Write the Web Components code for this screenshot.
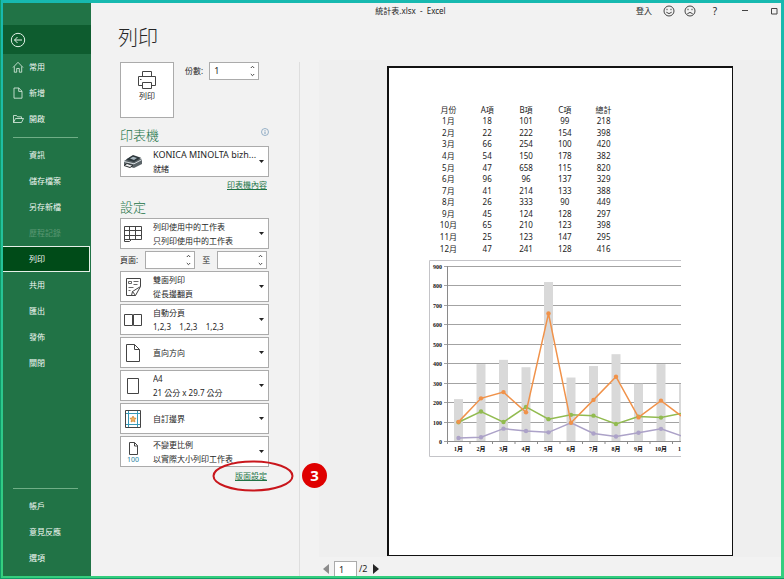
<!DOCTYPE html>
<html lang="zh-Hant">
<head>
<meta charset="utf-8">
<title>統計表.xlsx - Excel</title>
<style>
html, body { margin: 0; }
body { font-family: "Noto Sans", "Noto Sans CJK TC", sans-serif; font-size: 8px; line-height: 12px; color: #262626; }
</style>
</head>
<body>
<print-window></print-window>
<script>
function define(name, html, setup) {
  const t = document.createElement('template');
  t.innerHTML = html;
  customElements.define(name, class extends HTMLElement {
    constructor() {
      super();
      this.attachShadow({ mode: 'open' }).append(t.content.cloneNode(true));
    }
    connectedCallback() { if (setup) setup(this, this.shadowRoot); }
  });
}

/* One entry of the green navigation column. */
define('nav-item', `
<style>
:host { display: block; height: 26px; }
button { all: unset; box-sizing: border-box; display: grid; grid-template-columns: 12px 1fr; gap: 5px; align-items: center; width: 100%; height: 100%; padding-left: 9px; color: #f1f8f3; font-size: 8px; cursor: pointer; }
button:disabled { color: #5a9873; }
:host([current]) button { background: #004b18; border: solid #e6f0e8; border-width: 1px 1px 1px 0; }
:host([current]) { margin-right: 1px; }
.icon { display: grid; }
</style>
<button><span class="icon"><slot name="icon"></slot></span><span><slot></slot></span></button>`,
(el, root) => {
  const b = root.querySelector('button');
  b.disabled = el.hasAttribute('disabled');
  if (el.hasAttribute('current')) b.setAttribute('aria-current', 'page');
});

define('side-nav', `
<style>
:host { display: flex; flex-direction: column; background: #217346; padding: 22px 0 5px; }
.back { all: unset; box-sizing: border-box; height: 29px; padding-left: 7px; background: #0e5c2f; display: flex; align-items: center; cursor: pointer; }
hr { width: calc(100% - 23px); margin: 5px 0 4px 10px; border: 0; border-top: 1px solid #6fae86; box-sizing: border-box; }
nav:last-of-type { margin-top: auto; }
svg { fill: none; stroke: #e3f1e7; stroke-width: 1; }
nav svg { stroke-width: .8; }
</style>
<button class="back" aria-label="返回"><svg width="16" height="16" viewBox="0 0 16 16"><circle cx="8" cy="8" r="6.7"/><path d="M12 8H4.5M7.5 5l-3 3 3 3"/></svg></button>
<nav>
<nav-item><svg slot="icon" width="12" height="12" viewBox="0 0 12 12"><path d="M1 6.5 6 1.3l5 5.2M2.3 5.5v5.7h2.4V7.5h2.6v3.7h2.4V5.5"/></svg>常用</nav-item>
<nav-item><svg slot="icon" width="12" height="12" viewBox="0 0 12 12"><path d="M2 1h4.8L10 4.2V11.2H2zM6.7 1v3.4H10"/></svg>新增</nav-item>
<nav-item><svg slot="icon" width="12" height="12" viewBox="0 0 12 12"><path d="M1.5 9.5v-7h3l1 1.3h4v1.7M1.5 9.5l2-4h8l-2 4z"/></svg>開啟</nav-item>
<hr>
<nav-item>資訊</nav-item><nav-item>儲存檔案</nav-item><nav-item>另存新檔</nav-item><nav-item disabled>歷程記錄</nav-item><nav-item current>列印</nav-item><nav-item>共用</nav-item><nav-item>匯出</nav-item><nav-item>發佈</nav-item><nav-item>關閉</nav-item>
</nav>
<nav>
<hr>
<nav-item>帳戶</nav-item><nav-item>意見反應</nav-item><nav-item>選項</nav-item>
</nav>`);

define('title-bar', `
<style>
:host { display: flex; align-items: center; height: 16px; }
.name { flex: 1; text-align: center; padding-left: 94px; white-space: pre; }
.tools { display: flex; align-items: center; }
button { all: unset; display: grid; place-items: center; cursor: pointer; }
.face { width: 21px; }
.help { width: 30px; font-size: 10px; }
.win { width: 30px; }
.win:last-child { width: 14px; margin-left: 7px; }
svg { fill: none; stroke: #444; stroke-width: 1; }
.tools .sign { margin-right: 6px; }
</style>
<span class="name">統計表.xlsx  -  Excel</span>
<div class="tools">
<button class="sign">登入</button>
<button class="face" aria-label="微笑"><svg width="12" height="12" viewBox="0 0 12 12"><circle cx="6" cy="6" r="5"/><path d="M3.3 7.2q2.7 2.8 5.4 0M4 3.8v1.4M8 3.8v1.4"/></svg></button>
<button class="face" aria-label="皺眉"><svg width="12" height="12" viewBox="0 0 12 12"><circle cx="6" cy="6" r="5"/><path d="M3.3 8.8q2.7-2.8 5.4 0M4 3.8v1.4M8 3.8v1.4"/></svg></button>
<button class="help" aria-label="說明">?</button>
<button class="win" aria-label="最小化"><svg width="8" height="8" viewBox="0 0 8 8"><path d="M1 3.5h6"/></svg></button>
<button class="win" aria-label="最大化"><svg width="8" height="8" viewBox="0 0 8 8"><path d="M1.5 1.500h5.500v5.500h-5.500z"/></svg></button>
</div>`);

/* Number box with a pair of step buttons. */
define('spin-box', `
<style>
:host { display: grid; grid-template-columns: 1fr 11px; box-sizing: border-box; width: 50px; height: 18px; background: #fff; border: 1px solid #ababab; }
input { all: unset; box-sizing: border-box; min-width: 0; width: 100%; padding-left: 4px; font-size: 9px; appearance: textfield; }
input::-webkit-inner-spin-button { display: none; }
.steps { display: grid; grid-template-rows: 1fr 1fr; }
button { all: unset; display: grid; place-items: center; }
svg { fill: none; stroke: #444; }
</style>
<input type="number" min="1">
<span class="steps"><button aria-label="增加"><svg width="5" height="4" viewBox="0 0 5 4"><path d="M.8 3 2.5 1.3 4.2 3"/></svg></button><button aria-label="減少"><svg width="5" height="4" viewBox="0 0 5 4"><path d="M.8 1 2.5 2.7 4.2 1"/></svg></button></span>`,
(el, root) => {
  const i = root.querySelector('input'), [up, down] = root.querySelectorAll('button');
  i.value = el.getAttribute('value') || '';
  i.setAttribute('aria-label', el.getAttribute('label'));
  up.onclick = () => i.stepUp();
  down.onclick = () => i.stepDown();
});

/* Drop-down with an icon and an optional description line. */
define('setting-picker', `
<style>
:host { display: grid; grid-template-columns: 24px 1fr 5px; grid-template-rows: 1fr 1fr; align-items: center; box-sizing: border-box; height: 31px; padding-right: 4px; background: #fff; border: 1px solid #ababab; }
.icon { grid-area: 1 / 1 / 3 / 2; display: grid; place-items: center; }
select { all: unset; grid-area: 1 / 2 / 2 / 4; padding-left: 8px; line-height: 13px; white-space: nowrap; font-size: 8px; }
:host(:not([note])) select { grid-row: 1 / 3; }
:host([latin]) select { font-size: 9px; }
.note { grid-area: 2 / 2 / 3 / 3; padding-left: 8px; white-space: pre; pointer-events: none; }
.arrow { grid-area: 1 / 3 / 3 / 4; pointer-events: none; }
</style>
<span class="icon"><slot></slot></span>
<select><option></option></select>
<span class="note"></span>
<svg class="arrow" width="5" height="3" viewBox="0 0 5 3"><path d="M0 0h5L2.5 3z" fill="#222"/></svg>`,
(el, root) => {
  root.querySelector('option').textContent = el.getAttribute('value');
  root.querySelector('select').setAttribute('aria-label', el.getAttribute('label'));
  const n = root.querySelector('.note');
  if (el.hasAttribute('note')) n.textContent = el.getAttribute('note'); else n.remove();
});

define('print-settings', `
<style>
:host { display: flex; flex-direction: column; gap: 2px; box-sizing: border-box; padding: 0 30px 8px 29px; border-right: 1px solid #dedede; }
.top { display: flex; gap: 11px; height: 56px; }
.top label { line-height: 18px; }
.top .copies { display: flex; gap: 6px; align-items: flex-start; }
.print { all: unset; box-sizing: border-box; width: 54px; background: #fff; border: 1px solid #ababab; display: flex; flex-direction: column; align-items: center; padding-top: 7px; cursor: pointer; }
.head { display: flex; justify-content: space-between; height: 18px; margin-top: 6px; }
h2 { margin: 0; font-size: 13px; line-height: 18px; font-weight: 300; color: #217346; }
.range { display: flex; align-items: center; gap: 7px; height: 18px; }
.link { position: relative; height: 11px; line-height: 11px; padding-right: 2px; text-align: right; }
.link.last { margin-top: 1px; }
a { color: #217346; text-decoration: underline; }
.ring { position: absolute; right: -25px; top: -10px; }
.badge { position: absolute; right: -58px; top: -7px; width: 25px; height: 25px; border-radius: 50%; background: #df0000; color: #fff; font: bold 15px/25px "Noto Sans", sans-serif; text-align: center; }
.line { fill: none; stroke: #444; }
</style>
<div class="top">
<button class="print"><svg class="line" width="20" height="20" viewBox="0 0 20 20"><path d="M5.5 6.500v-5h9v5M5.500 15.500h-4v-9h17v9h-4M5.500 12.500h9v6h-9zM3 9.500h1.500"/></svg><span>列印</span></button>
<div class="copies"><label>份數:</label><spin-box label="份數" value="1"></spin-box></div>
</div>
<div class="head"><h2>印表機</h2><svg width="8" height="12" viewBox="0 0 8 12" fill="none" stroke="#7f9fbd"><circle cx="4" cy="6" r="3.500" stroke-width=".8"/><path d="M4 5.500v2.500M4 4v.8"/></svg></div>
<setting-picker latin label="印表機" value="KONICA MINOLTA bizh..." note="就緒"><svg width="20" height="16" viewBox="0 0 20 16"><path d="M1 7 9 2l10 3v5l-8 4-10-3z" fill="#5b6468"/><path d="M3 5.500 10 1l8 2.800-7 4.200z" fill="#2e383d"/><path d="M7 4.500l3-1.700 4 1.300-3 1.900z" fill="#a9b8c0"/><path d="M1 7.500l10 2.300L19 5.500" stroke="#d6dcdf" fill="none"/><path d="M1 11.500 4 9.500l6 2-3 2z" fill="#f3f3f3" stroke="#2b3033"/></svg></setting-picker>
<div class="link"><a href="#printer">印表機內容</a></div>
<div class="head"><h2>設定</h2></div>
<setting-picker label="列印範圍" value="列印使用中的工作表" note="只列印使用中的工作表"><svg class="line" width="20" height="18" viewBox="0 0 20 18"><path d="M1.500 1.500h17v13h-10l-2 2h-5zM1.500 5.500h17M1.500 10.500h17M6.500 1.500v13M12.500 1.500v13M1.500 14.500h7"/></svg></setting-picker>
<div class="range"><label>頁面:</label><spin-box label="起始頁"></spin-box><label>至</label><spin-box label="結束頁"></spin-box></div>
<setting-picker label="雙面" value="雙面列印" note="從長邊翻頁"><svg class="line" width="18" height="20" viewBox="0 0 18 20"><path d="M8 18.500h-5.500v-17h14v8l-5 9-3-4 8-5M8.500 14.500l-1 4h4"/><path d="M4.500 4.500h3v2h-3zM9.500 4.500h5M9.500 7.500h4M4.500 10.500h5M4.500 13.500h2" stroke-width=".8"/></svg></setting-picker>
<setting-picker label="自動分頁" value="自動分頁" note="1,2,3    1,2,3    1,2,3"><svg class="line" width="20" height="14" viewBox="0 0 20 14"><path d="M1.500 1.500h8v11h-8zM10.500 1.500h8v11h-8z"/></svg></setting-picker>
<setting-picker label="方向" value="直向方向"><svg class="line" width="16" height="20" viewBox="0 0 16 20"><path d="M1.500 1.500h8l5 5v12h-13zM9.500 1.500v5h5"/></svg></setting-picker>
<setting-picker label="紙張大小" value="A4" note="21 公分 x 29.7 公分"><svg class="line" width="14" height="18" viewBox="0 0 14 18"><path d="M1.500 1.500h11v15h-11z"/></svg></setting-picker>
<setting-picker label="邊界" value="自訂邊界"><svg class="line" width="18" height="20" viewBox="0 0 18 20"><path d="M1.500 1.500h15v17h-15z"/><path d="M4.500 2v16M13.500 2v16M2 4.500h14M2 15.500h14" stroke="#3799b8"/><path d="m9 7 .9 2 2.200.3-1.600 1.500.4 2.200L9 11.900 7.100 13l.4-2.200-1.600-1.500 2.200-.3z" fill="#f3b562" stroke="#c9802a" stroke-width=".7"/></svg></setting-picker>
<setting-picker label="縮放比例" value="不變更比例" note="以實際大小列印工作表"><svg class="line" width="16" height="22" viewBox="0 0 16 22"><path d="M4.500 13.500v-12h5l3 3v9zM9.500 1.500v3.500h3.500"/><text x="8" y="21" text-anchor="middle" font-size="7" fill="#1d7fa0" stroke="none">100</text></svg></setting-picker>
<div class="link last"><a href="#page-setup">版面設定</a>
<svg class="ring" width="82" height="32" viewBox="0 0 82 32"><ellipse cx="41" cy="16" rx="39.500" ry="14.500" fill="none" stroke="#c9161c" stroke-width="2"/></svg>
<span class="badge">3</span></div>`);

const data = [
  [18, 101, 99, 218], [22, 222, 154, 398], [66, 254, 100, 420], [54, 150, 178, 382],
  [47, 658, 115, 820], [96, 96, 137, 329], [41, 214, 133, 388], [26, 333, 90, 449],
  [45, 124, 128, 297], [65, 210, 123, 398], [25, 123, 147, 295], [47, 241, 128, 416]
];

define('data-table', `
<style>
:host { display: block; width: 77%; }
table { width: 100%; height: 150px; border-collapse: collapse; table-layout: fixed; color: #1c1c1c; }
th, td { padding: 0; font-weight: 400; text-align: center; line-height: 11px; }
</style>
<table><thead><tr><th>月份</th><th>A項</th><th>B項</th><th>C項</th><th>總計</th></tr></thead><tbody></tbody></table>`,
(el, root) => {
  root.querySelector('tbody').innerHTML = data.map((r, i) =>
    `<tr><td>${i + 1}月</td>${r.map(v => `<td>${v}</td>`).join('')}</tr>`).join('');
});

/* Combined column and line chart; the sheet edge cuts it off on the right. */
define('data-chart', `
<style>
:host { display: block; }
svg { display: block; width: 100%; }
text { font: bold 6px "Liberation Serif", "Noto Sans CJK TC", serif; fill: #111; }
</style>
<svg viewBox="0 0 252 197"></svg>`,
(el, root) => {
  const y = v => 181.5 - v * 175 / 900, x = i => 29.5 + i * 22.5;
  let s = '<path d="M252 .5H.5v196H252" fill="none" stroke="#c4c4c8"/>';
  for (let v = 0; v <= 900; v += 100) {
    const gy = Math.floor(y(v)) + .5;
    s += `<path d="M15 ${gy}H252" stroke="#a3a3a3"/><text x="13" y="${gy + 2}" text-anchor="end">${v}</text>`;
  }
  data.forEach((r, i) => { if (i < 11) s += `<rect x="${x(i) - 4.5}" y="${y(r[3])}" width="9" height="${r[3] * 175 / 900}" fill="#d9d9d9"/>`; });
  s += '<path d="M18.500 6v176" stroke="#8a8a8a"/><path d="M18 181.500H252" stroke="#8a8a8a"/>';
  for (let i = 0; i < 11; i++) s += `<path d="M${18.5 + i * 22.5} 181v3" stroke="#8a8a8a"/>`;
  [[0, '#aca2c8'], [2, '#92bb50'], [1, '#f0924a']].forEach(([k, c]) => {
    s += `<polyline points="${data.map((r, i) => x(i) + ',' + y(r[k])).join(' ')}" fill="none" stroke="${c}" stroke-width="1.500"/>`;
    data.slice(0, 10).forEach((r, i) => { s += `<circle cx="${x(i)}" cy="${y(r[k])}" r="2.200" fill="${c}"/>`; });
  });
  for (let i = 0; i < 10; i++) s += `<text x="${x(i)}" y="191" text-anchor="middle">${i + 1}月</text>`;
  s += '<text x="249" y="191">1</text>';
  root.querySelector('svg').innerHTML = s;
});

define('print-preview', `
<style>
:host { display: flex; flex-direction: column; padding-left: 19px; }
.desk { display: grid; grid-template-columns: 68fr 346fr 48fr; padding: 6px 0 1px; background: #efefef; }
.sheet { grid-column: 2; box-sizing: border-box; aspect-ratio: 346 / 490; background: #fff; border: 2px solid #111; border-right-width: 1px; border-bottom-width: 1px; padding: 36px 51px 0 40px; }
data-chart { margin-top: 6px; }
.pager { display: flex; align-items: center; gap: 5px; margin-top: 4px; padding-left: 4px; height: 15px; }
.pager input { all: unset; box-sizing: border-box; width: 23px; height: 15px; padding-left: 4px; font-size: 9px; background: #fff; border: 1px solid #ababab; border-bottom: 0; }
.pager button { all: unset; display: grid; cursor: pointer; }
.pager label { margin-left: -3px; font-size: 9px; }
</style>
<div class="desk"><div class="sheet"><data-table></data-table><data-chart></data-chart></div></div>
<div class="pager">
<button aria-label="上一頁"><svg width="6" height="10" viewBox="0 0 6 10"><path d="M6 0v10L0 5z" fill="#8c8c8c"/></svg></button>
<input id="page" value="1" aria-label="頁碼"><label for="page">/2</label>
<button aria-label="下一頁"><svg width="6" height="10" viewBox="0 0 6 10"><path d="M0 0v10l6-5z" fill="#262626"/></svg></button>
</div>`);

define('print-window', `
<style>
:host { display: grid; grid-template-columns: 88px 1fr; box-sizing: border-box; min-height: 100vh; padding: 3px; background: linear-gradient(#17b9b0, #35cf7d); box-shadow: inset 1px -1px 0 #129a68; }
main { display: flex; flex-direction: column; min-width: 0; background: #f2f2f2; }
h1 { margin: 0 0 3px; padding-left: 27px; font-size: 20px; line-height: 38px; font-weight: 300; }
.body { flex: 1; display: grid; grid-template-columns: 209px 1fr; }
print-preview { min-width: 0; }
print-settings { margin-top: 2px; }
</style>
<side-nav></side-nav>
<main><title-bar></title-bar><h1>列印</h1><div class="body"><print-settings></print-settings><print-preview></print-preview></div></main>`);
</script>
</body>
</html>
